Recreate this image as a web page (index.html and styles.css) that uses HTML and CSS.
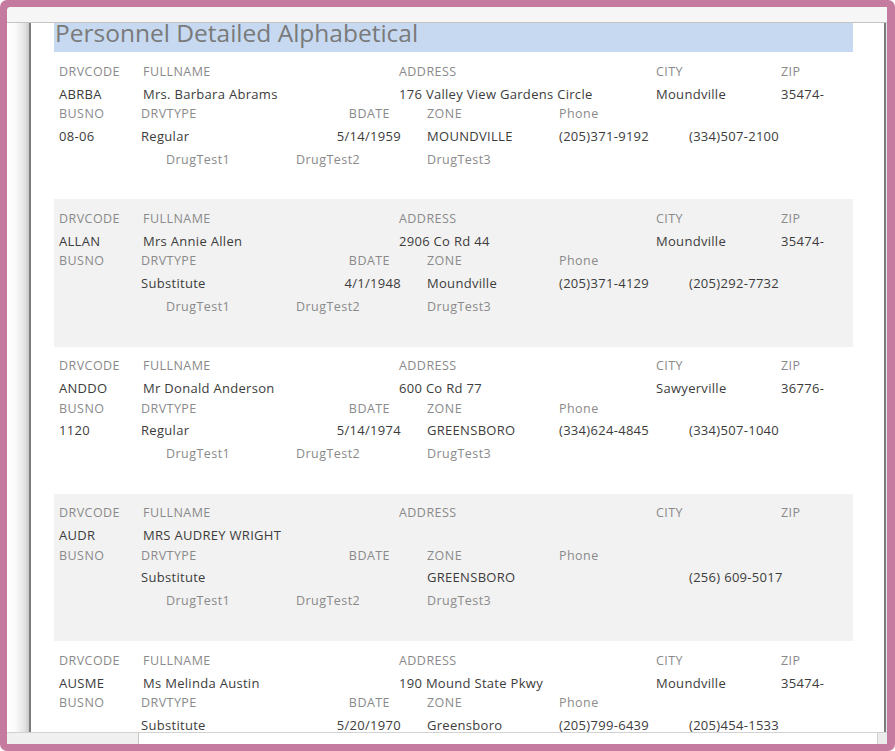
FILE: index.html
```html
<!DOCTYPE html>
<html lang="en">
<head>
<meta charset="utf-8">
<title>Personnel Detailed Alphabetical</title>
<link rel="stylesheet" href="styles.css">
</head>
<body>
<div class="frame">
  <div class="window">
    <div class="topbar"></div>
    <div class="main">
      <div class="gutter"></div>
      <div class="page">
        <div class="report">
          <h1 class="title">Personnel Detailed Alphabetical</h1>

          <div class="record">
            <div class="line la"><span class="lbl">DRVCODE</span><span class="lbl">FULLNAME</span><span class="lbl">ADDRESS</span><span class="lbl">CITY</span><span class="lbl">ZIP</span></div>
            <div class="line lb"><span class="val">ABRBA</span><span class="val">Mrs. Barbara Abrams</span><span class="val">176 Valley View Gardens Circle</span><span class="val">Moundville</span><span class="val">35474-</span></div>
            <div class="line lc"><span class="lbl">BUSNO</span><span class="lbl">DRVTYPE</span><span class="lbl rt">BDATE</span><span></span><span class="lbl">ZONE</span><span class="lbl">Phone</span><span></span></div>
            <div class="line ld"><span class="val">08-06</span><span class="val">Regular</span><span class="val rt">5/14/1959</span><span></span><span class="val">MOUNDVILLE</span><span class="val">(205)371-9192</span><span class="val">(334)507-2100</span></div>
            <div class="line le"><span class="lbl">DrugTest1</span><span class="lbl">DrugTest2</span><span class="lbl">DrugTest3</span></div>
          </div>

          <div class="record alt">
            <div class="line la"><span class="lbl">DRVCODE</span><span class="lbl">FULLNAME</span><span class="lbl">ADDRESS</span><span class="lbl">CITY</span><span class="lbl">ZIP</span></div>
            <div class="line lb"><span class="val">ALLAN</span><span class="val">Mrs Annie Allen</span><span class="val">2906 Co Rd 44</span><span class="val">Moundville</span><span class="val">35474-</span></div>
            <div class="line lc"><span class="lbl">BUSNO</span><span class="lbl">DRVTYPE</span><span class="lbl rt">BDATE</span><span></span><span class="lbl">ZONE</span><span class="lbl">Phone</span><span></span></div>
            <div class="line ld"><span class="val"></span><span class="val">Substitute</span><span class="val rt">4/1/1948</span><span></span><span class="val">Moundville</span><span class="val">(205)371-4129</span><span class="val">(205)292-7732</span></div>
            <div class="line le"><span class="lbl">DrugTest1</span><span class="lbl">DrugTest2</span><span class="lbl">DrugTest3</span></div>
          </div>

          <div class="record">
            <div class="line la"><span class="lbl">DRVCODE</span><span class="lbl">FULLNAME</span><span class="lbl">ADDRESS</span><span class="lbl">CITY</span><span class="lbl">ZIP</span></div>
            <div class="line lb"><span class="val">ANDDO</span><span class="val">Mr Donald Anderson</span><span class="val">600 Co Rd 77</span><span class="val">Sawyerville</span><span class="val">36776-</span></div>
            <div class="line lc"><span class="lbl">BUSNO</span><span class="lbl">DRVTYPE</span><span class="lbl rt">BDATE</span><span></span><span class="lbl">ZONE</span><span class="lbl">Phone</span><span></span></div>
            <div class="line ld"><span class="val">1120</span><span class="val">Regular</span><span class="val rt">5/14/1974</span><span></span><span class="val">GREENSBORO</span><span class="val">(334)624-4845</span><span class="val">(334)507-1040</span></div>
            <div class="line le"><span class="lbl">DrugTest1</span><span class="lbl">DrugTest2</span><span class="lbl">DrugTest3</span></div>
          </div>

          <div class="record alt">
            <div class="line la"><span class="lbl">DRVCODE</span><span class="lbl">FULLNAME</span><span class="lbl">ADDRESS</span><span class="lbl">CITY</span><span class="lbl">ZIP</span></div>
            <div class="line lb"><span class="val">AUDR</span><span class="val">MRS AUDREY WRIGHT</span><span class="val"></span><span class="val"></span><span class="val"></span></div>
            <div class="line lc"><span class="lbl">BUSNO</span><span class="lbl">DRVTYPE</span><span class="lbl rt">BDATE</span><span></span><span class="lbl">ZONE</span><span class="lbl">Phone</span><span></span></div>
            <div class="line ld"><span class="val"></span><span class="val">Substitute</span><span class="val rt"></span><span></span><span class="val">GREENSBORO</span><span class="val"></span><span class="val">(256) 609-5017</span></div>
            <div class="line le"><span class="lbl">DrugTest1</span><span class="lbl">DrugTest2</span><span class="lbl">DrugTest3</span></div>
          </div>

          <div class="record">
            <div class="line la"><span class="lbl">DRVCODE</span><span class="lbl">FULLNAME</span><span class="lbl">ADDRESS</span><span class="lbl">CITY</span><span class="lbl">ZIP</span></div>
            <div class="line lb"><span class="val">AUSME</span><span class="val">Ms Melinda Austin</span><span class="val">190 Mound State Pkwy</span><span class="val">Moundville</span><span class="val">35474-</span></div>
            <div class="line lc"><span class="lbl">BUSNO</span><span class="lbl">DRVTYPE</span><span class="lbl rt">BDATE</span><span></span><span class="lbl">ZONE</span><span class="lbl">Phone</span><span></span></div>
            <div class="line ld"><span class="val"></span><span class="val">Substitute</span><span class="val rt">5/20/1970</span><span></span><span class="val">Greensboro</span><span class="val">(205)799-6439</span><span class="val">(205)454-1533</span></div>
            <div class="line le"><span class="lbl">DrugTest1</span><span class="lbl">DrugTest2</span><span class="lbl">DrugTest3</span></div>
          </div>
        </div>
      </div>
    </div>
    <div class="hscroll">
      <div class="hs-left"></div>
      <div class="hs-track"></div>
      <div class="hs-corner"></div>
    </div>
  </div>
</div>
</body>
</html>
```

FILE: styles.css
```css
* { box-sizing: border-box; }

html, body {
  margin: 0;
  padding: 0;
  background: #ffffff;
}

body {
  font-family: "Open Sans", "Liberation Sans", sans-serif;
  width: 895px;
  height: 751px;
  overflow: hidden;
}

.frame {
  width: 895px;
  height: 751px;
  background: #c47b9f;
  border-radius: 7px;
  padding: 7px 8px 7px 7px;
}

.window {
  width: 880px;
  height: 737px;
  background: #ffffff;
  border-top-left-radius: 4px;
  display: flex;
  flex-direction: column;
  overflow: hidden;
}

.topbar {
  height: 16px;
  flex: none;
  background: #f6f6f6;
  border-bottom: 1px solid #c4c4c4;
}

.main {
  flex: 1;
  display: flex;
  min-height: 0;
  background: #e6e6e6;
  padding-right: 1px;
}

.gutter {
  width: 22px;
  flex: none;
  background: linear-gradient(to right, #ffffff 0, #fbfbfb 8px, #e2e2e2 18px, #c8c8c8 22px);
}

.page {
  flex: 1;
  background: #ffffff;
  border-left: 2px solid #7d7d7d;
  border-right: 2px solid #7d7d7d;
  overflow: hidden;
  padding-left: 23px;
}

.report {
  width: 799px;
}

.title {
  margin: 0;
  height: 29px;
  background: #c6d9f0;
  color: #7a7a7a;
  font-weight: normal;
  font-size: 24.5px;
  line-height: 20px;
  padding-left: 1px;
  white-space: nowrap;
}

.record {
  height: 147.3px;
  padding-top: 8px;
}

.record.alt {
  background: #f2f2f2;
}

.line {
  display: grid;
  align-items: center;
  white-space: nowrap;
}

.la, .lb {
  grid-template-columns: 84px 256px 257px 125px 1fr;
  padding-left: 5px;
}

.lc, .ld {
  grid-template-columns: 82px 160px 100px 26px 132px 130px 1fr;
  padding-left: 5px;
}

.le {
  grid-template-columns: 130px 131px 1fr;
  padding-left: 112px;
}

.la { height: 22px; }
.lb { height: 21px; padding-top: 2px; }
.lc { height: 21px; }
.ld { height: 23px; padding-top: 0; }
.le { height: 24px; }

.lbl {
  font-size: 12.5px;
  letter-spacing: 0.45px;
  color: #8a8a8a;
}

.val {
  font-size: 13px;
  letter-spacing: 0.3px;
  color: #3c3c3c;
}

.rt {
  text-align: right;
}

.lbl.rt {
  padding-right: 11px;
}

.hscroll {
  height: 12px;
  flex: none;
  display: flex;
  border-top: 1px solid #d2d2d2;
  background: #f0f0f0;
}

.hs-left {
  width: 131px;
  background: #f0f0f0;
}

.hs-track {
  flex: 1;
  background: #ffffff;
  border-left: 1px solid #c8c8c8;
  border-right: 1px solid #d0d0d0;
}

.hs-corner {
  width: 9px;
  background: #ececec;
}
```
